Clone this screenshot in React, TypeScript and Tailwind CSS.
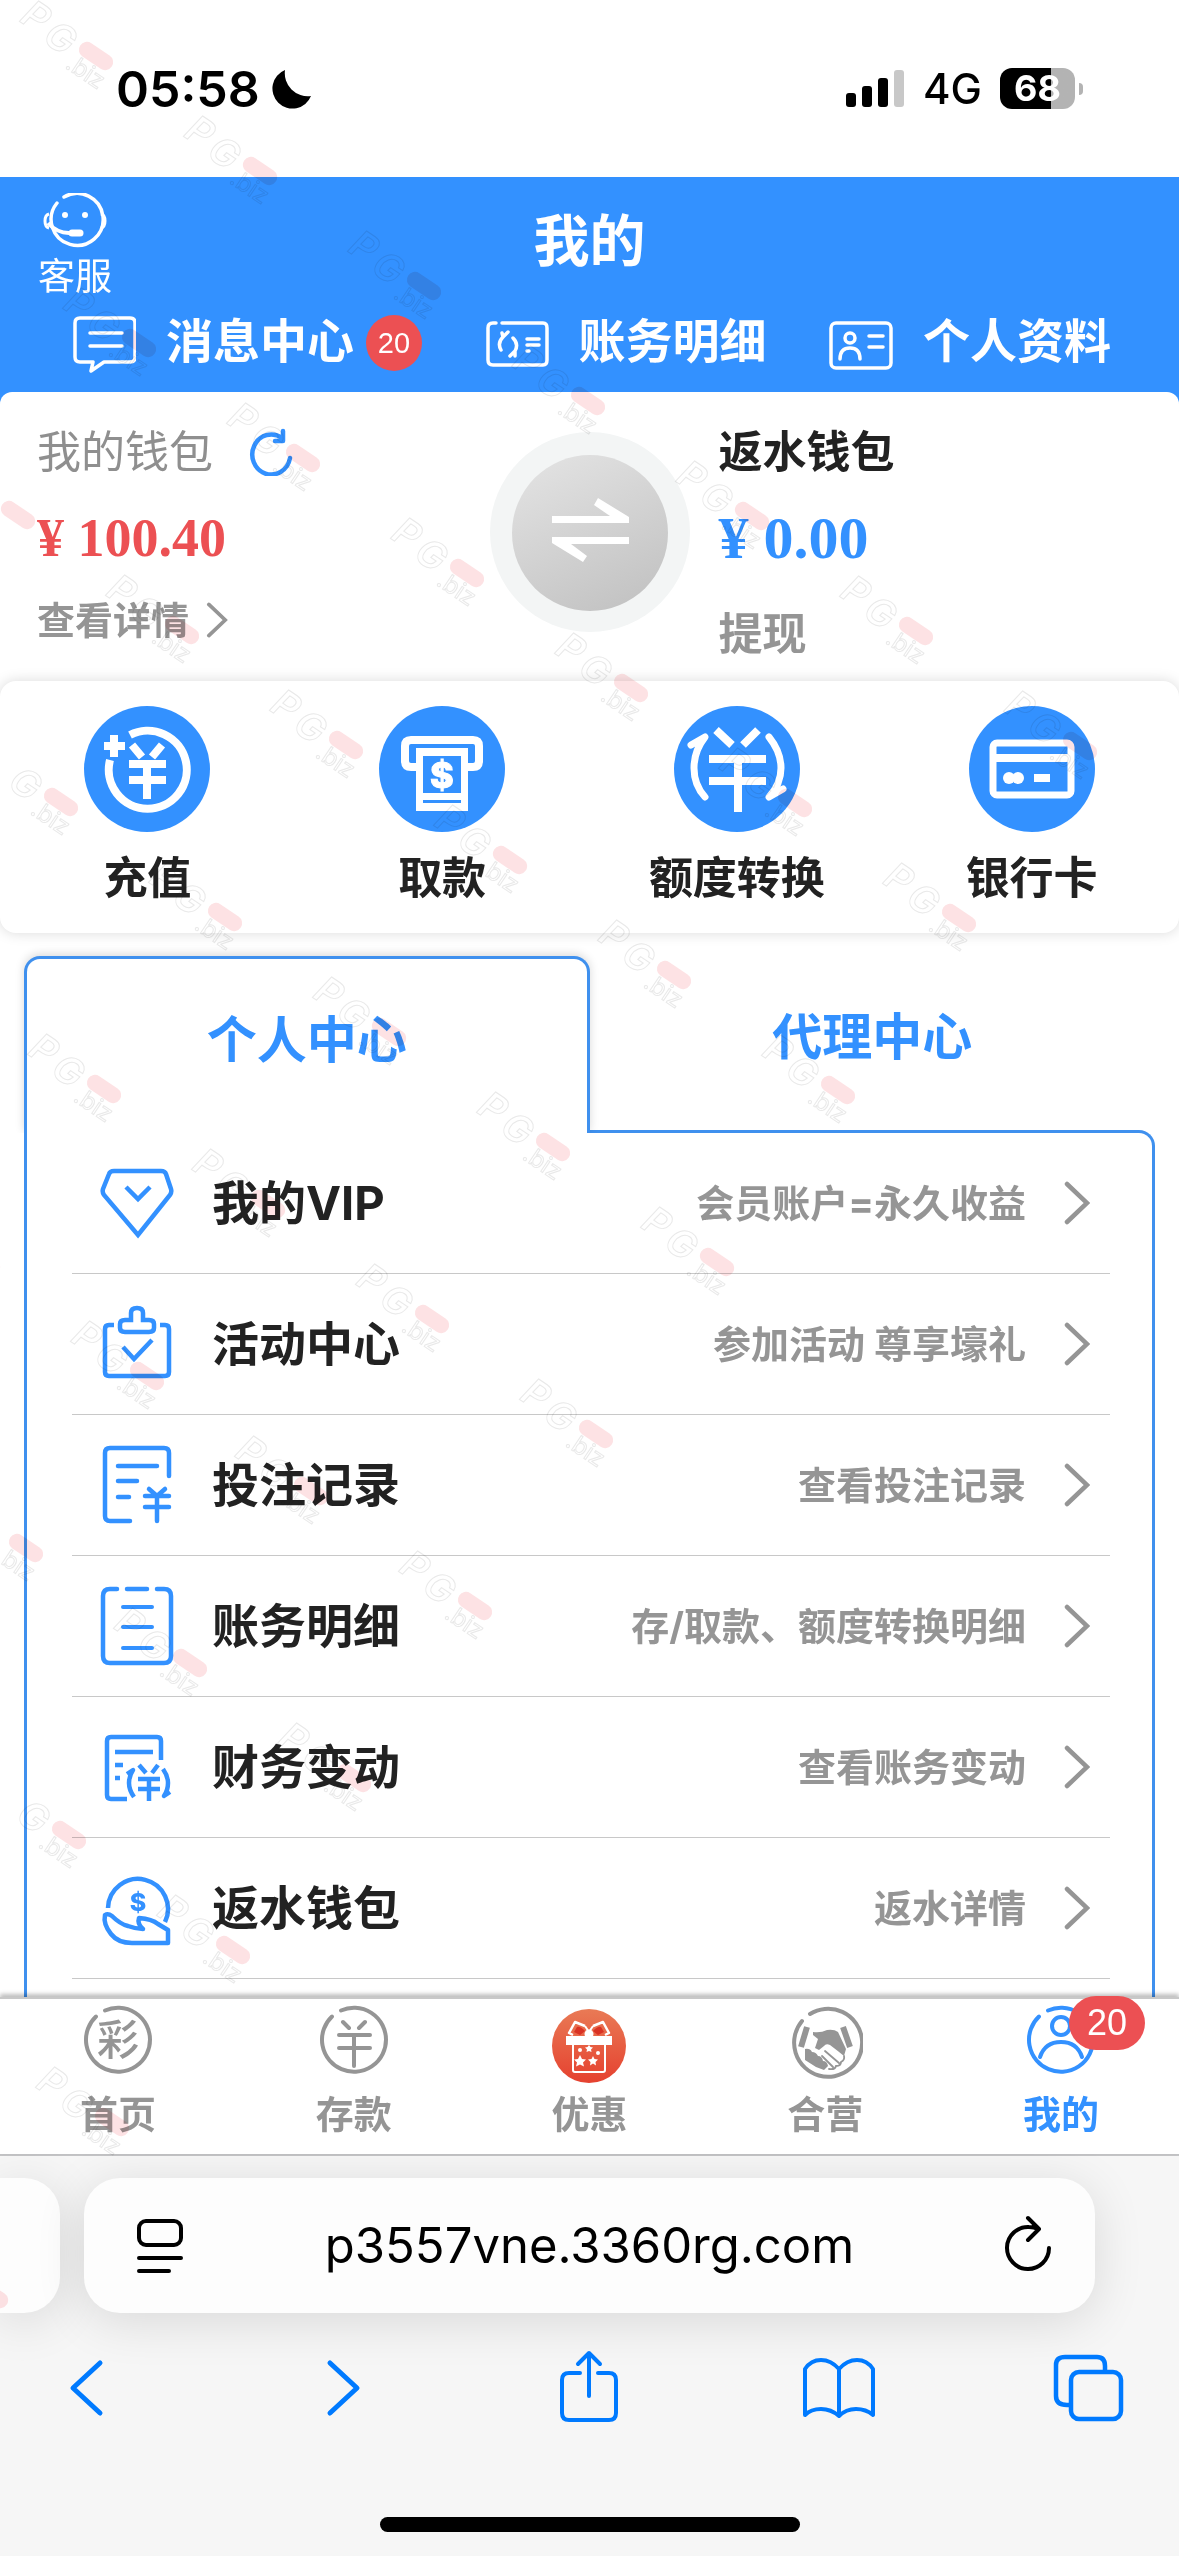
import type { ReactNode } from "react";
import clsx from "clsx";

type IconProps = { className?: string };

function YenTransfer() {
  return (
    <g fill="none" stroke="currentColor" strokeWidth="8">
      <path d="M42 24 58 39M84 24 69 39M35 53h57M35 75h57M64 53v53" />
      <g strokeWidth="7" strokeLinecap="round" strokeLinejoin="round">
        <path d="M17 39 31 31Q20 45 20 62T31 91" />
        <path d="M109 83 95 91Q107 78 107 62T95 31" />
      </g>
    </g>
  );
}

function SupportIcon() {
  return (
    <svg className="h-14 w-16" viewBox="0 0 64 56" fill="none" stroke="currentColor">
      <path d="M21 4A26 26 0 1 1 14 10" strokeWidth="3.5" strokeLinecap="round" />
      <path d="M6 21Q2 22 2 28T6 35M58 21Q62 22 62 28T58 35" strokeWidth="3" />
      <path d="M5 30Q14 40 26 40h9" strokeWidth="4" />
      <path d="M29 40h8" strokeWidth="7" strokeLinecap="round" />
      <circle cx="22" cy="22" r="3" fill="currentColor" stroke="none" />
      <circle cx="42" cy="22" r="3" fill="currentColor" stroke="none" />
    </svg>
  );
}

function MessageIcon() {
  return (
    <svg className="h-15 w-16" viewBox="0 0 64 60" fill="none" stroke="currentColor" strokeWidth="3.5" strokeLinejoin="round" strokeLinecap="round">
      <path d="M8 5h50q5 0 5 5v34q0 5-5 5H32l-13 9 2-9H8q-5 0-5-5V10q0-5 5-5Z" />
      <path d="M18 20h32M18 33h32" />
    </svg>
  );
}

function BillIcon() {
  return (
    <svg className="h-15 w-16" viewBox="0 0 64 60" fill="none" stroke="currentColor" strokeWidth="3.5" strokeLinecap="round" strokeLinejoin="round">
      <path d="M17 10h41q4 0 4 5v32q0 5-4 5H8q-5 0-5-5V15q0-5 5-5h3" />
      <path d="M23 19 18 24Q12 30 16 37M17 20l1 4M25 43l5-5Q34 31 28 25M30 43v-5" />
      <path d="M42 26h12M42 32h12M42 38h2" />
    </svg>
  );
}

function IdCardIcon() {
  return (
    <svg className="h-15 w-16" viewBox="0 0 64 60" fill="none" stroke="currentColor" strokeWidth="3.5" strokeLinecap="round">
      <rect x="2" y="10" width="60" height="45" rx="5" />
      <circle cx="21" cy="25" r="5" />
      <path d="M11 46q0-11 10-11t10 11M40 23h14M40 34h14" />
    </svg>
  );
}

function RefreshIcon({ className }: IconProps) {
  return (
    <svg className={className} viewBox="0 0 44 48" fill="none" stroke="currentColor" strokeWidth="4.5" strokeLinecap="round" strokeLinejoin="round">
      <path d="M33 10A19 20 0 1 0 41 30" />
      <path d="M34 3v10h-8" />
    </svg>
  );
}

function ChevronIcon({ className }: IconProps) {
  return (
    <svg className={className} viewBox="0 0 26 44" fill="none" stroke="currentColor" strokeWidth="4.5" strokeLinecap="round">
      <path d="M3 3 23 22 3 41" />
    </svg>
  );
}

function YenRing({ children }: { children: ReactNode }) {
  return (
    <svg className="size-[76px]" viewBox="0 0 76 76" fill="none" stroke="currentColor" strokeWidth="4" strokeLinecap="round">
      <path d="M25 6.5A32 32 0 1 1 16 12.5" />
      {children}
    </svg>
  );
}

function GiftIcon() {
  return (
    <svg className="size-[76px] overflow-visible" viewBox="0 0 76 76">
      <defs>
        <linearGradient id="gift" x1="0" y1="0" x2="0" y2="1">
          <stop offset="0" stopColor="#e97a55" />
          <stop offset="1" stopColor="#e5412f" />
        </linearGradient>
      </defs>
      <circle cx="38" cy="42" r="37" fill="url(#gift)" />
      <g fill="none" stroke="#fff" strokeWidth="2" strokeLinejoin="round">
        <path d="M22 40v26q0 2 2 2h28q2 0 2-2V40" />
        <path d="M34 22 24 18 18 29l4 2M42 22l10-4 6 11-4 2" strokeWidth="2.5" />
        <path d="M34 22 38 28l4-6" strokeWidth="2" />
      </g>
      <path d="M34 27q-5-5-8-4l-3 5 6 3ZM42 27q5-5 8-4l3 5-6 3Z" fill="#d93224" />
      <path d="M15 32h46v9H15z" fill="#fff" />
      <circle cx="38" cy="30" r="4.5" fill="#fff" />
      <g fill="#fff">
        <path d="m29 51 2 4 4 .5-3 3 1 4-4-2-4 2 1-4-3-3 4-.5Z" />
        <path d="m42 52 1.5 3 3.5.5-2.5 2.5.5 3.500-3-2-3 2 .5-3.500-2.500-2.500 3.500-.5Z" />
        <path d="m38 41 1.500 2 2.500.5-2 2 .5 2.500-2.500-1-2.500 1 .5-2.500-2-2 2.500-.5Z" />
        <circle cx="29" cy="46" r="2" />
        <circle cx="47" cy="49" r="2" />
      </g>
    </svg>
  );
}

function HandshakeIcon() {
  return (
    <svg className="size-[76px]" viewBox="0 0 76 76">
      <path d="M23 10A34 34 0 1 1 15 17" fill="none" stroke="currentColor" strokeWidth="4" strokeLinecap="round" />
      <path d="M20 23 14 43M56 23l7 20" stroke="currentColor" strokeWidth="6" />
      <path
        d="M26 28q8 1 14-2 7-1 11 2l8 17-2 7q-6-5-14-11-4-2-6 1l-5 4-4-2 3-9-5-4Z"
        fill="currentColor"
      />
      <path d="M18 45q5-1 7 3 4 0 6 4 4 0 5 5 4 0 5 5l-4 4-8-3-11-7Z" fill="currentColor" />
      <path
        d="M38 47 52 59M35 52l11 11M57 52q1 4-3 6 0 4-5 4-1 4-7 3"
        fill="none"
        stroke="currentColor"
        strokeWidth="1.8"
        strokeLinecap="round"
      />
    </svg>
  );
}

const headerLinks = [
  { label: "消息中心", icon: <MessageIcon />, badge: 20 },
  { label: "账务明细", icon: <BillIcon /> },
  { label: "个人资料", icon: <IdCardIcon /> },
];

const quickActions = [
  {
    label: "充值",
    icon: (
      <g fill="none" stroke="currentColor" strokeWidth="8">
        <path d="M46 29A39 39 0 1 1 26 54M20 40h21M30 29v22" />
        <path d="M48 39 58 51M78 39 68 51M45 58h37M45 74h37M63 58v35" />
      </g>
    ),
  },
  {
    label: "取款",
    icon: (
      <>
        <path
          d="M37 61h-5q-6 0-6-6V40q0-6 6-6h62q6 0 6 6v15q0 6-6 6h-5"
          fill="none"
          stroke="currentColor"
          strokeWidth="8"
        />
        <path d="M37 42h52v63H37z" fill="currentColor" />
        <path d="M44 50h38v37H44zM44 94h38v3H44z" fill="#3391ff" />
        <text x="63" y="82" textAnchor="middle" fontSize="36" fontWeight="800" fill="currentColor" stroke="currentColor">
          $
        </text>
      </>
    ),
  },
  { label: "额度转换", icon: <YenTransfer /> },
  {
    label: "银行卡",
    icon: (
      <>
        <rect x="24" y="37" width="78" height="52" rx="4" fill="none" stroke="currentColor" strokeWidth="7" />
        <path d="M24 52h78M65 72h16" stroke="currentColor" strokeWidth="8" />
        <circle cx="40" cy="72" r="6" fill="currentColor" />
        <circle cx="49" cy="72" r="6" fill="currentColor" />
      </>
    ),
  },
];

const menu = [
  {
    label: "我的VIP",
    hint: "会员账户=永久收益",
    icon: (
      <>
        <path d="M14 8h47q4 0 5 3l5 15q1 3-1 6L38 72 4 32q-2-3-1-6l6-15q1-3 5-3Z" />
        <path d="m26 24 12 12 12-12" />
      </>
    ),
  },
  {
    label: "活动中心",
    hint: "参加活动 尊享壕礼",
    icon: (
      <>
        <path d="M14 21H9q-4 0-4 4v43q0 4 4 4h56q4 0 4-4V25q0-4-4-4h-5" />
        <path d="M31 16V9q0-5 6-5t6 5v7h6q5 0 5 4v4q0 4-5 4H25q-5 0-5-4v-4q0-4 5-4Z" />
        <path d="m23 43 11 12 18-19" />
      </>
    ),
  },
  {
    label: "投注记录",
    hint: "查看投注记录",
    icon: (
      <g strokeLinecap="round">
        <path d="M69 31V8q0-5-5-5H10Q5 3 5 8v63q0 5 5 5h20" />
        <path d="M18 21h39M18 36h19M18 52h11M49 44l8 7 8-7M45 51h24M45 62h24M57 51v25" />
      </g>
    ),
  },
  {
    label: "账务明细",
    hint: "存/取款、额度转换明细",
    icon: (
      <g strokeLinecap="round">
        <path d="M17 3h-7Q3 3 3 10v60q0 7 7 7h54q7 0 7-7V10q0-7-7-7h-7M27 3h20" />
        <path d="M23 21h29M23 41h29M23 62h29" strokeWidth="4" />
      </g>
    ),
  },
  {
    label: "财务变动",
    hint: "查看账务变动",
    icon: (
      <>
        <path d="M61 33V14q0-4-4-4H11q-4 0-4 4v54q0 4 4 4h16M15 25h38M15 38h8M15 51h5" />
        <path d="m39 38 7 8M58 38l-6 8M38 52h22M38 62h22M49 52v22" />
        <path d="M27 47l6-4Q29 49 29 56t5 14M70 65l-6 4Q68 63 68 56T63 42" strokeLinejoin="round" />
      </>
    ),
  },
  {
    label: "返水钱包",
    hint: "返水详情",
    icon: (
      <>
        <path d="M8 40A30 30 0 1 1 65 54" />
        <path
          d="M5 47Q8 45 12 48 20 56 28 58 36 61 43 61 37 56 39 50 52 51 58 56L68 62V75H32Q18 75 11 66 3 56 5 47Z"
          strokeLinejoin="round"
        />
        <text x="38" y="43" textAnchor="middle" fontSize="25" fontWeight="800" fill="currentColor" stroke="none">
          $
        </text>
      </>
    ),
  },
];

const navItems = [
  {
    label: "首页",
    icon: (
      <YenRing>
        <text x="38" y="51" textAnchor="middle" fontSize="42" fontWeight="500" fill="currentColor" stroke="none">
          彩
        </text>
      </YenRing>
    ),
  },
  {
    label: "存款",
    icon: (
      <YenRing>
        <path d="M27 18l6 6M49 18l-6 6M23 31h31M23 44h31M38 31v31" />
      </YenRing>
    ),
  },
  { label: "优惠", icon: <GiftIcon /> },
  { label: "合营", icon: <HandshakeIcon /> },
  {
    label: "我的",
    active: true,
    badge: 20,
    icon: (
      <YenRing>
        <circle cx="38" cy="22" r="9" />
        <path d="M17 53Q22 38 38 38t21 15" />
      </YenRing>
    ),
  },
];

function StatusBar() {
  return (
    <div className="flex h-[177px] shrink-0 items-center justify-between pr-24 pl-[116px]">
      <div className="flex items-center gap-3">
        <time className="text-[50px] font-semibold leading-none">05:58</time>
        <svg className="size-10" viewBox="0 0 40 40">
          <path d="M13 1A23 23 0 0 0 39 27 20 20 0 1 1 13 1Z" />
        </svg>
      </div>
      <div className="flex items-center gap-[18px]">
        <svg className="h-10 w-[60px]" viewBox="0 0 60 40">
          <rect x="1" y="24" width="10" height="14" rx="3" />
          <rect x="17" y="17" width="10" height="21" rx="3" />
          <rect x="33" y="9" width="10" height="29" rx="3" />
          <rect x="49" y="1" width="10" height="37" rx="3" fill="#c8c8c8" />
        </svg>
        <span className="text-[42px] font-medium leading-none">4G</span>
        <div className="flex items-center gap-1">
          <div className="h-[41px] w-[75px] rounded-xl bg-linear-to-r from-black from-68% to-[#b3b3b3] to-68% text-center text-[36px] font-bold leading-[41px] text-white">
            68
          </div>
          <span className="h-3 w-1 rounded-r bg-[#b3b3b3]" />
        </div>
      </div>
    </div>
  );
}

function Header() {
  return (
    <header className="bg-[#3391ff] pt-4 pb-[19px] text-white">
      <div className="mb-3 grid grid-cols-[1fr_auto_1fr] px-[38px]">
        <button type="button" className="grid justify-items-center gap-1 justify-self-start">
          <SupportIcon />
          <span className="text-[37px] leading-[48px]">客服</span>
        </button>
        <h1 className="text-[56px] font-bold leading-[96px]">我的</h1>
      </div>
      <nav className="flex justify-between pr-[68px] pl-[72px]">
        {headerLinks.map((link) => (
          <a key={link.label} href="#" className="flex items-center">
            {link.icon}
            <span className="ml-[30px] pb-1 text-[47px] font-bold leading-[52px]">{link.label}</span>
            {link.badge && (
              <span className="ml-3 size-14 rounded-full bg-[#ec5053] text-center font-['Liberation_Sans',sans-serif] text-[29px] leading-[56px]">
                {link.badge}
              </span>
            )}
          </a>
        ))}
      </nav>
    </header>
  );
}

function Wallet() {
  return (
    <div className="bg-[#3391ff]">
      <section className="grid h-[283px] grid-cols-[1fr_200px_1fr] rounded-t-xl bg-white pt-8">
        <div className="pl-[37px] text-[#8f8f8f]">
          <div className="flex items-center text-[44px] leading-[56px]">
            我的钱包
            <button type="button" aria-label="刷新" className="ml-9 text-[#3391ff]">
              <RefreshIcon className="h-12 w-11" />
            </button>
          </div>
          <p className="mt-[22px] font-['Liberation_Serif',serif] text-[54px] font-bold leading-[72px] text-[#ec5053]">
            ¥ 100.40
          </p>
          <a href="#" className="mt-[22px] flex items-center text-[38px] font-bold leading-[48px] text-[#959595]">
            查看详情
            <ChevronIcon className="ml-4 h-9 w-6" />
          </a>
        </div>
        <button type="button" aria-label="互转" className="mt-2 size-[200px]">
          <svg viewBox="0 0 200 200" fill="none">
            <defs>
              <linearGradient id="swap" x1="0.2" y1="0" x2="0.7" y2="1">
                <stop offset="0" stopColor="#e2e2e2" />
                <stop offset="1" stopColor="#c3c3c3" />
              </linearGradient>
            </defs>
            <circle cx="100" cy="100" r="100" fill="#f3f5f5" />
            <circle cx="100" cy="101" r="78" fill="url(#swap)" />
            <path d="M62 84h58l-16-11 4-7 31 19v6H62ZM139 112H81l16 12-4 6-31-19v-6h77Z" fill="#fff" />
          </svg>
        </button>
        <div className="pl-[29px]">
          <h2 className="text-[44px] font-bold leading-[56px] text-[#222]">返水钱包</h2>
          <p className="mt-[22px] font-['Liberation_Serif',serif] text-[60px] font-bold leading-[72px] text-[#3391ff]">
            ¥ 0.00
          </p>
          <a href="#" className="mt-8 block text-[44px] font-bold leading-[56px] text-[#959595]">
            提现
          </a>
        </div>
      </section>
    </div>
  );
}

function QuickActions() {
  return (
    <section className="mt-[6px] grid grid-cols-4 rounded-2xl bg-white pt-[25px] pb-[27px] shadow-[0_0_14px_rgba(0,0,0,0.15)]">
      {quickActions.map((action) => (
        <a key={action.label} href="#" className="flex flex-col items-center gap-[18px]">
          <svg className="size-[126px] rounded-full bg-[#3391ff] text-white" viewBox="0 0 126 126">
            {action.icon}
          </svg>
          <span className="text-[44px] font-bold leading-[56px] text-[#222]">{action.label}</span>
        </a>
      ))}
    </section>
  );
}

function Tabs() {
  return (
    <div role="tablist" className="relative grid grid-cols-2 text-[50px] font-bold text-[#3391ff]">
      <button
        type="button"
        role="tab"
        aria-selected="true"
        className="-mb-[3px] h-[177px] rounded-t-2xl border-3 border-b-0 border-[#3f90ee] bg-white pb-3 shadow-[0_-2px_10px_rgba(0,0,0,0.15)] [clip-path:inset(-12px_-12px_0)]"
      >
        个人中心
      </button>
      <button type="button" role="tab" aria-selected="false" className="h-[174px] pb-3">
        代理中心
      </button>
    </div>
  );
}

function Menu() {
  return (
    <ul className="rounded-tr-2xl border-3 border-b-0 border-[#3f90ee] pr-[42px] pb-10 pl-[45px]">
      {menu.map((item) => (
        <li key={item.label} className="border-b border-[#c8c8c8]">
          <a href="#" className="flex h-[140px] items-center pr-5 pl-7">
            <svg
              className="h-20 w-[74px] text-[#3391ff]"
              viewBox="0 0 74 80"
              fill="none"
              stroke="currentColor"
              strokeWidth="4.5"
            >
              {item.icon}
            </svg>
            <span className="ml-[38px] text-[47px] font-bold leading-[60px] text-[#222]">{item.label}</span>
            <span className="ml-auto text-[38px] font-bold text-[#959595]">{item.hint}</span>
            <ChevronIcon className="ml-[38px] h-11 w-[26px] text-[#959595]" />
          </a>
        </li>
      ))}
    </ul>
  );
}

function BottomNav() {
  return (
    <nav className="relative grid shrink-0 grid-cols-5 border-t-2 border-[#c8c8c8] bg-white pt-[5px] pb-[18px] shadow-[0_-3px_4px_rgba(0,0,0,0.25)]">
      {navItems.map((item) => (
        <a
          key={item.label}
          href="#"
          className={clsx(
            "flex flex-col items-center gap-3",
            item.active ? "text-[#3391ff]" : "text-[#959595]"
          )}
        >
          <span className="relative">
            {item.icon}
            {item.badge && (
              <span className="absolute -top-2 left-[46px] h-[54px] w-[76px] rounded-full bg-[#ec5053] text-center font-['Liberation_Sans',sans-serif] text-[36px] leading-[54px] text-white">
                {item.badge}
              </span>
            )}
          </span>
          <span className="text-[38px] font-bold leading-[44px]">{item.label}</span>
        </a>
      ))}
    </nav>
  );
}

function BrowserBar() {
  return (
    <footer className="flex h-[402px] shrink-0 flex-col border-t-2 border-[#c4c4c6] bg-[#f6f6f6] pt-[22px] pb-6">
      <div className="flex gap-6 pr-[84px]">
        <div className="h-[135px] w-[60px] rounded-r-[36px] bg-[#fdfdfd] shadow-[0_8px_50px_rgba(0,0,0,0.12)]" />
        <div className="flex h-[135px] min-w-0 flex-1 items-center justify-between rounded-[36px] bg-[#fdfdfd] px-[44px] shadow-[0_8px_50px_rgba(0,0,0,0.12)]">
          <button type="button" aria-label="页面菜单">
            <svg className="size-16" viewBox="0 0 64 64" fill="none" stroke="#000" strokeWidth="4" strokeLinecap="round">
              <rect x="11" y="7" width="42" height="24" rx="7" />
              <path d="M11 44h42M11 57h30" />
            </svg>
          </button>
          <input
            aria-label="地址"
            readOnly
            value="p3557vne.3360rg.com"
            className="min-w-0 flex-1 bg-transparent text-center text-[49px] leading-[64px]"
          />
          <button type="button" aria-label="重新载入">
            <svg className="size-16" viewBox="-8 0 64 64" fill="none" stroke="#000" strokeWidth="4" strokeLinecap="round" strokeLinejoin="round">
              <path d="M43 15Q39 13 34 13A21 21 0 1 0 54 34M33 4 44 15 33 26" />
            </svg>
          </button>
        </div>
      </div>
      <div className="mt-9 flex justify-between pr-[55px] pl-[50px] text-[#007aff]">
        <button type="button" aria-label="后退">
          <svg className="size-[74px]" viewBox="0 0 74 74" fill="none" stroke="currentColor" strokeWidth="5" strokeLinecap="round" strokeLinejoin="round">
            <path d="M50 14 23 39l27 25" />
          </svg>
        </button>
        <button type="button" aria-label="前进">
          <svg className="size-[74px]" viewBox="0 0 74 74" fill="none" stroke="currentColor" strokeWidth="5" strokeLinecap="round" strokeLinejoin="round">
            <path d="m30 14 27 25-27 25" />
          </svg>
        </button>
        <button type="button" aria-label="分享">
          <svg className="size-[74px]" viewBox="0 0 74 74" fill="none" stroke="currentColor" strokeWidth="4" strokeLinecap="round" strokeLinejoin="round">
            <path d="M30 24H19q-7 0-7 7v33q0 7 7 7h40q7 0 7-7V31q0-7-7-7H48M39 47V4M28 15 39 4l11 11" />
          </svg>
        </button>
        <button type="button" aria-label="书签">
          <svg className="size-[74px] overflow-visible" viewBox="-1 0 74 74" fill="none" stroke="currentColor" strokeWidth="4" strokeLinecap="round" strokeLinejoin="round">
            <path d="M38 20Q30 11 20 11T4 20v46q6-6 16-6t18 7q7-7 17-7t17 6V20q-6-9-16-9T38 20v46" />
          </svg>
        </button>
        <button type="button" aria-label="标签页">
          <svg className="size-[74px] overflow-visible" viewBox="-1 0 74 74" fill="none" stroke="currentColor" strokeWidth="4.5" strokeLinejoin="round">
            <path d="M18 56h-2q-11 0-11-9V16Q5 8 14 8h32q8 0 8 9v5" />
            <rect x="20" y="23" width="50" height="47" rx="8" />
          </svg>
        </button>
      </div>
      <div className="mx-auto mt-auto h-[15px] w-[420px] rounded-full bg-black" />
    </footer>
  );
}

// diagonal rows of stamps, each row one stamp shorter than the row above
const stamps = Array.from({ length: 10 }, (_, row) =>
  Array.from({ length: 10 }, (_, i) => i - 3)
    .filter((col) => col <= 6 - row)
    .map((col) => ({ x: 96 + row * 43 + col * 164, y: 56 + row * 287 + col * 115 }))
    .filter(({ x }) => x > -20)
).flat();

function Watermark() {
  return (
    <svg className="pointer-events-none absolute inset-0 size-full mix-blend-multiply" aria-hidden="true">
      {stamps.map(({ x, y }) => (
        <g key={`${x}-${y}`} transform={`translate(${x} ${y}) rotate(34)`}>
          <g fill="none" stroke="#e9e9e9" fontWeight="600">
            {x > 70 && (
              <text x="-84" y="14" fontSize="38" fontStyle="italic">
                P
              </text>
            )}
            {x > 50 && (
              <text x="-54" y="18" fontSize="38" fontStyle="italic">
                G
              </text>
            )}
            {x > 20 && (
              <text x="-20" y="27" fontSize="24" fontWeight="400">
                .biz
              </text>
            )}
          </g>
          <rect x="-19" y="-8" width="38" height="16" rx="8" fill="#f04a55" opacity="0.16" />
        </g>
      ))}
    </svg>
  );
}

export default function App() {
  return (
    <div
      lang="zh-CN"
      className="relative flex h-screen flex-col overflow-hidden bg-white font-['Inter','Noto_Sans_CJK_SC',sans-serif] text-black"
    >
      <StatusBar />
      <main className="min-h-0 flex-1 overflow-hidden">
        <Header />
        <Wallet />
        <QuickActions />
        <section className="mt-[23px] px-6">
          <Tabs />
          <Menu />
        </section>
      </main>
      <BottomNav />
      <BrowserBar />
      <Watermark />
    </div>
  );
}
